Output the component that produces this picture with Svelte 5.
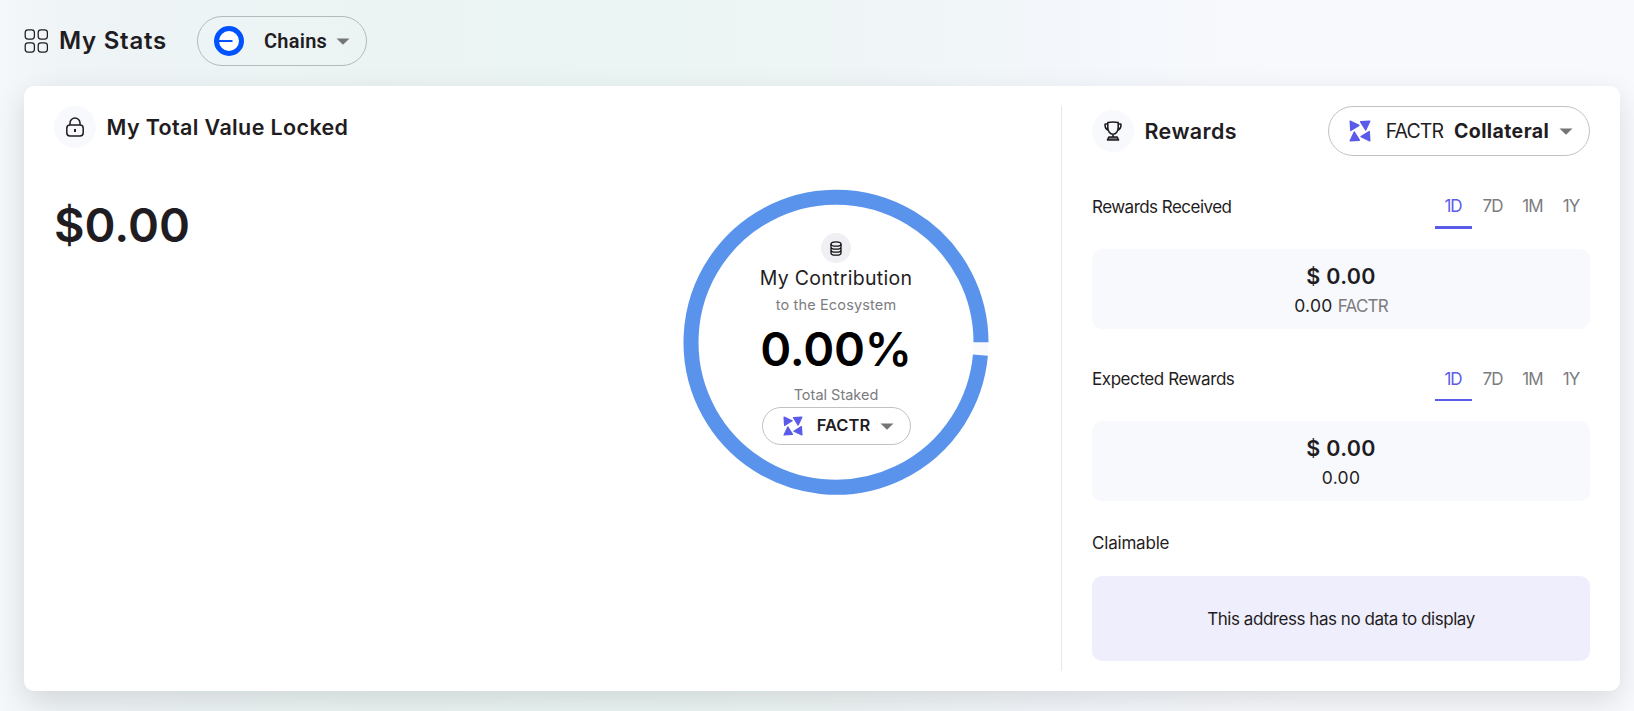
<script>
  const periods = ['1D', '7D', '1M', '1Y'];
</script>

{#snippet token(size)}
  <svg width={size} height={size} viewBox="0 0 22 22" fill="#5b5bea" stroke="#5b5bea" stroke-width="1.4" stroke-linejoin="round">
    <path d="M1.2 1.2 10 5.3 1.8 10.4ZM20.8 1.2 16.7 10 11.6 1.8ZM20.8 20.8 12 16.7 20.2 11.6ZM1.2 20.8 5.3 12 10.4 20.2Z" />
  </svg>
{/snippet}

{#snippet caret()}
  <svg class="caret" width="14" height="7" viewBox="0 0 14 7"><path d="M.5 .5h13L7 6.8Z" fill="#757575" /></svg>
{/snippet}

{#snippet tabs(thin)}
  <div class="tabs" class:thin>
    {#each periods as p, i}
      <span class="tab p{i}" class:active={i === 0}>{p}</span>
    {/each}
  </div>
{/snippet}

<div class="page">
  <header>
    <svg width="24" height="24" viewBox="0 0 24 24" fill="none" stroke="#1f1d22" stroke-width="1.25">
      <rect x="1.2" y=".8" width="9.2" height="9.2" rx="2.8" /><rect x="14.2" y=".8" width="9.2" height="9.2" rx="2.8" />
      <rect x="1.2" y="13.8" width="9.2" height="9.2" rx="2.8" /><rect x="14.2" y="13.8" width="9.2" height="9.2" rx="2.8" />
    </svg>
    <h1>My Stats</h1>
    <button class="chains">
      <svg width="30" height="30" viewBox="0 0 30 30"><circle cx="15" cy="15" r="12.5" fill="#fff" stroke="#0052ff" stroke-width="5" /><path d="M3 15h15.5" stroke="#0052ff" stroke-width="2" /></svg>
      <span>Chains</span>
      {@render caret()}
    </button>
  </header>

  <main>
    <section class="locked">
      <div class="value">
        <div class="heading">
          <span class="badge">
            <svg width="20" height="20" viewBox="0 0 20 20" fill="none" stroke="#1f1d22" stroke-width="1.5"><rect x="1.8" y="8" width="16.4" height="11" rx="3.2" /><path d="M5 8V6a5 5 0 0 1 10 0v2" /><path d="M10 12v3" stroke-width="2" /></svg>
          </span>
          <h2>My Total Value Locked</h2>
        </div>
        <div class="total">$0.00</div>
      </div>
      <div class="donut">
        <svg class="ring" width="306" height="306" viewBox="0 0 306 306" fill="none" stroke-width="15">
          <circle cx="153" cy="153.3" r="145" stroke="#fafafc" />
          <path d="M297.42 166.2A145 145 0 1 1 298 153.3" stroke="#5a93eb" />
        </svg>
        <div class="center">
          <span class="coin">
            <svg width="12" height="15" viewBox="0 0 12 15" fill="none" stroke="#111" stroke-width="1.3"><ellipse cx="6" cy="3" rx="5" ry="2.2" /><path d="M1 3v9c0 1.3 2 2.2 5 2.2s5-.9 5-2.2V3M1 6c0 1.3 2 2.2 5 2.2S11 7.3 11 6M1 9c0 1.3 2 2.2 5 2.2S11 10.3 11 9" /></svg>
          </span>
          <div class="c1">My Contribution</div>
          <div class="c2">to the Ecosystem</div>
          <div class="c3">0.00%</div>
          <div class="c4">Total Staked</div>
          <button class="staked">{@render token(20)}<span>FACTR</span>{@render caret()}</button>
        </div>
      </div>
    </section>

    <section class="rewards">
      <div class="rhead">
        <span class="badge">
          <svg width="18" height="20" viewBox="0 0 18 20" fill="none" stroke="#1f1d22" stroke-width="1.6" stroke-linejoin="round"><path d="M3.8 1.5Q9 .5 14.2 1.5V6.5C14.2 10 12 13.2 9 13.2S3.8 10 3.8 6.5ZM3.8 3H1.2Q.4 7.5 4.7 9.5M14.2 3h2.6Q17.6 7.5 13.3 9.5M9 13.2V16" /><path d="M4.8 16h8.4l1.3 3H3.5Z" fill="#77757a" /></svg>
        </span>
        <h2>Rewards</h2>
        <button class="collateral">{@render token(22)}<span>FACTR</span><b>Collateral</b>{@render caret()}</button>
      </div>

      <div class="row"><h3 class="received">Rewards Received</h3>{@render tabs(false)}</div>
      <div class="box"><strong>$ 0.00</strong><p>0.00 <span class="unit">FACTR</span></p></div>

      <div class="row second"><h3 class="expected">Expected Rewards</h3>{@render tabs(true)}</div>
      <div class="box"><strong>$ 0.00</strong><p>0.00</p></div>

      <h3 class="claim">Claimable</h3>
      <div class="empty">This address has no data to display</div>
    </section>
  </main>
</div>

<style>
  :global(body) { background: #f8f9fd; }
  .page {
    box-sizing: border-box; height: 711px; padding: 16px 14px 20px 24px; overflow: hidden;
    display: flex; flex-direction: column; gap: 20px;
    font-family: Inter, "Liberation Sans", sans-serif; color: #1f1d22;
    background: linear-gradient(90deg, #f5f8fb 0, #eff4f7 60px, #ebf4f3 370px, #ebf5f3 660px, #eff5f6 860px, #f3f7fb 1050px, #f8f9fd 1300px);
  }
  svg { display: block; flex: none; }
  h1, h2, h3, p { margin: 0; font-weight: 500; white-space: nowrap; }
  button { box-sizing: border-box; display: flex; align-items: center; padding: 0; background: none; border: 1px solid #c2c2c2; border-radius: 25px; color: inherit; font-family: inherit; white-space: nowrap; }
  header { display: flex; align-items: center; height: 50px; }
  h1 { width: 137px; margin-left: 11px; font-size: 24px; font-weight: 600; line-height: 30px; letter-spacing: .75px; }
  .chains { width: 170px; height: 50px; margin-left: 1px; padding-left: 16px; border-color: #b4b9ba; }
  .chains span { width: 62px; margin: 0 10px 0 20px; font: 600 20px/24px Roboto, sans-serif; letter-spacing: .25px; }
  main { box-sizing: border-box; height: 605px; padding: 20px 30px; display: flex; background: #fff; border-radius: 10px; box-shadow: 0 10px 30px rgba(0, 0, 0, .12); }
  .locked { display: flex; width: 1007px; border-right: 1px solid #e7e7e9; }
  .value { width: 629px; }
  .heading, .rhead { display: flex; align-items: center; }
  .badge { display: grid; place-items: center; width: 42px; height: 42px; border-radius: 50%; background: #f8f9fd; }
  h2 { margin-left: 10.5px; font-size: 21.5px; font-weight: 600; line-height: 28px; letter-spacing: .37px; }
  .total { margin-top: 52px; font-size: 47px; font-weight: 600; line-height: 50px; }
  .donut { display: grid; width: 306px; height: 306px; margin-top: 83px; }
  .ring, .center { grid-area: 1 / 1; }
  .center { display: flex; flex-direction: column; align-items: center; padding-top: 44px; white-space: nowrap; }
  .coin { display: grid; place-items: center; width: 30px; height: 30px; border-radius: 50%; background: #efeff4; }
  .c1 { font-size: 19.5px; font-weight: 370; line-height: 31px; letter-spacing: .3px; }
  .c2, .c4 { color: #7c7c7f; font-size: 14.5px; line-height: 22px; }
  .c2 { letter-spacing: .15px; }
  .c3 { margin-top: 8px; color: #000; font-size: 47px; font-weight: 600; line-height: 50px; letter-spacing: -.2px; }
  .c4 { margin-top: 10px; }
  .staked { width: 149px; height: 38px; margin-top: 1px; padding-left: 20px; }
  .staked span { width: 54px; margin: 0 9px 3px 14px; font-size: 16.5px; font-weight: 600; }
  .rewards { width: 498px; padding-left: 30px; }
  .rhead { height: 50px; }
  .collateral { width: 262px; height: 50px; margin-left: auto; padding-left: 20px; }
  .collateral span { width: 59px; margin: 0 10px 0 14px; font-size: 19.5px; font-weight: 370; letter-spacing: -.9px; }
  .collateral b { width: 95px; margin-right: 10px; font-size: 19.5px; font-weight: 650; letter-spacing: .4px; }
  .row { display: flex; justify-content: space-between; height: 46px; margin-top: 29px; }
  .second { height: 45px; }
  h3 { font-size: 17px; font-weight: 400; line-height: 24px; letter-spacing: -.53px; }
  .row h3 { margin-top: 10px; }
  .row .expected { margin-top: 9px; letter-spacing: -.43px; }
  .tabs { display: flex; }
  .tab { box-sizing: border-box; display: flex; justify-content: center; height: 44px; padding-top: 10px; border-bottom: 3px solid transparent; color: #7c7c7f; font-size: 17px; line-height: 22px; letter-spacing: -1px; }
  .p0 { width: 37px; padding-right: 1px; } .p1 { width: 41px; } .p2 { width: 40px; padding-right: 1px; } .p3 { width: 37px; padding-right: 1px; }
  .active { border-color: #5b5bea; color: #5b5bea; }
  .thin .tab { height: 43px; border-bottom-width: 2px; }
  .box { box-sizing: border-box; height: 80px; margin-top: 18px; padding-top: 13px; display: flex; flex-direction: column; align-items: center; border-radius: 10px; background: #f8f9fd; }
  .box strong { font-size: 21.5px; font-weight: 600; line-height: 28px; letter-spacing: .3px; }
  .box p { margin-top: 2px; font-size: 17.5px; font-weight: 400; line-height: 28px; letter-spacing: .3px; }
  .unit { color: #7c7c7f; font-size: 17px; letter-spacing: -.8px; }
  .claim { margin-top: 30px; letter-spacing: -.2px; }
  .empty { display: grid; place-items: center; height: 85px; margin-top: 21px; border-radius: 10px; background: #efeefc; font-size: 17px; letter-spacing: -.46px; }
</style>
